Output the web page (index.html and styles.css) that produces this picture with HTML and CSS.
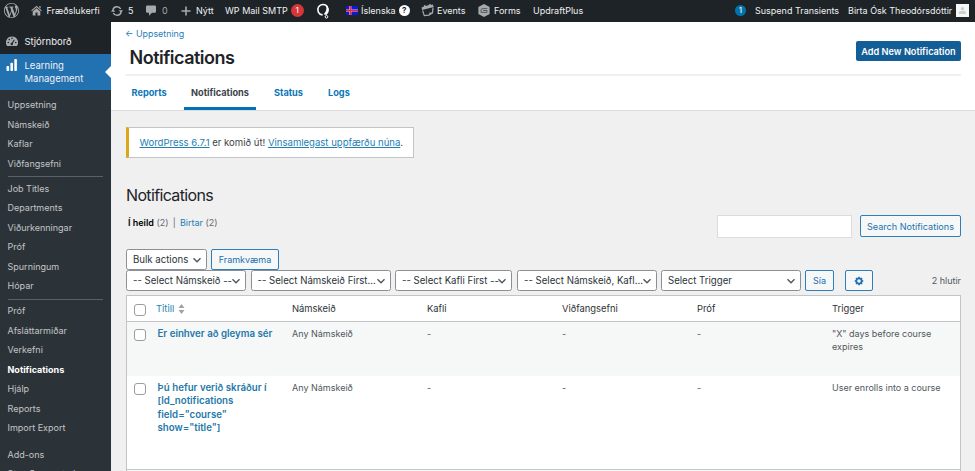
FILE: index.html
```html
<!DOCTYPE html>
<html lang="is">
<head>
<meta charset="utf-8">
<title>Notifications</title>
<link rel="stylesheet" href="styles.css">
</head>
<body>
<svg class="defs" width="0" height="0" aria-hidden="true">
  <symbol id="chev" viewBox="0 0 10 10"><path d="M1.500 3.200 5 6.700 8.500 3.200" fill="none" stroke="#50575e" stroke-width="1.400"/></symbol>
</svg>
<header class="bar">
  <span class="it wp"><svg width="15" height="15" viewBox="0 0 20 20"><path fill="#a7aaad" d="M20 10c0-5.510-4.490-10-10-10C4.480 0 0 4.490 0 10c0 5.520 4.480 10 10 10 5.510 0 10-4.480 10-10zM7.780 15.370L4.370 6.220c.55-.02 1.170-.08 1.170-.08.5-.06.44-1.130-.06-1.110 0 0-1.450.11-2.370.11-.18 0-.37 0-.58-.01C4.120 2.690 6.870 1.110 10 1.110c2.330 0 4.450.87 6.050 2.340-.68-.11-1.650.39-1.650 1.580 0 .74.45 1.360.9 2.100.35.61.55 1.360.55 2.460 0 1.490-1.400 5-1.400 5l-3.030-8.370c.54-.02.82-.17.82-.17.5-.05.44-1.250-.06-1.220 0 0-1.440.12-2.380.12-.87 0-2.330-.12-2.330-.12-.5-.03-.56 1.200-.06 1.220l.92.08 1.260 3.410zM17.410 10c.24-.64.74-1.870.43-4.250.7 1.290 1.050 2.710 1.050 4.250 0 3.290-1.730 6.240-4.400 7.780.97-2.590 1.940-5.200 2.920-7.780zM6.100 18.090C3.120 16.650 1.110 13.530 1.110 10c0-1.300.23-2.480.72-3.590C3.250 10.300 4.670 14.200 6.100 18.090zm4.030-6.630l2.580 6.980c-.86.29-1.760.45-2.710.45-.79 0-1.570-.11-2.290-.33.81-2.380 1.620-4.740 2.420-7.100z"/></svg></span>
  <span class="it home"><svg width="11" height="11" viewBox="0 0 11 11" fill="#a7aaad"><path d="M5.500.7 10.800 5.500l-.7.800L5.500 2.200.9 6.300.2 5.500zM8.300 1h1.300v2.600L8.300 2.400z"/><path d="M1.700 6.600 5.500 3.200l3.800 3.400v4H6.500V7.500h-2v3.100H1.700z"/></svg><span>Fræðslukerfi</span></span>
  <span class="it upd"><svg width="12" height="12" viewBox="0 0 12 12"><path d="M1.900 4.700A4.200 4.200 0 0 1 9.700 4M10.100 7.300A4.200 4.200 0 0 1 2.300 8" fill="none" stroke="#a7aaad" stroke-width="1.500"/><path fill="#a7aaad" d="M7.800 5.200h4.200L10 8zM0 6.800h4.200L2.100 4z"/></svg><span>5</span></span>
  <span class="it com dim"><svg width="10" height="11" viewBox="0 0 10 11"><path fill="#a7aaad" d="M1.200.500h7.600Q10 .5 10 1.700v4.800q0 1.200-1.200 1.200H6L3 10.800V7.700H1.200Q0 7.700 0 6.500V1.700Q0 .5 1.200.5z"/></svg><span>0</span></span>
  <span class="it new"><svg width="10" height="10" viewBox="0 0 10 10"><path d="M5 .500v9M.500 5h9" stroke="#a7aaad" stroke-width="1.600"/></svg><span>Nýtt</span></span>
  <span class="it smtp"><span>WP Mail SMTP</span><b class="badge red">1</b></span>
  <span class="it seo"><svg width="15" height="17" viewBox="0 0 15 17" fill="none" stroke="#fff"><path d="M6.600 12.900A5.200 5.200 0 1 1 11.500 5.200" stroke-width="1.600"/><path d="M10 3.200q3.300 1.700 2.900 5.200-.4 3.400-2.600 4.600L7.700 12.200Q11.500 9 10 3.200z" fill="#fff" stroke="none"/><circle cx="10.500" cy="14.800" r="1.300" stroke-width="1"/></svg></span>
  <span class="it lang"><svg width="12" height="9" viewBox="0 0 12 9"><path fill="#0b19d9" d="M0 0h12v9H0z"/><path d="M4.300 0v9M0 4.500h12" stroke="#ffb5b5" stroke-width="2.200"/><path d="M4.300 0v9M0 4.500h12" stroke="#f11c2c" stroke-width="1.200"/></svg><span>Íslenska</span><b class="badge help">?</b></span>
  <span class="it ev"><svg width="13" height="13" viewBox="0 0 13 13"><path fill="#a7aaad" d="M.5 3.500 3 2.600 2.800 1.300l1.300-.4.500 1.200 3.600-1.200L8 .2l1.400-.3.500 1.100 1.900-.5 1 2.500L1.100 6z"/><path d="m1.600 6.500 1.700 5.200 4.500-.6 3.700-2.300L12 3.600" fill="none" stroke="#a7aaad" stroke-width="1.200"/><path d="m8 11 .5-2.600 3.300.3z" fill="#a7aaad"/></svg><span>Events</span></span>
  <span class="it fo"><svg width="12" height="13" viewBox="0 0 12 13"><path fill="#a7aaad" d="m6 0 5.600 3v7L6 13 .4 10V3z"/><path d="M9.300 4.600H4.200Q3 4.600 3 6.500v1.900h6V6.500H5" fill="none" stroke="#4b5056" stroke-width=".9"/></svg><span>Forms</span></span>
  <span class="it up"><span>UpdraftPlus</span></span>
  <span class="it right"><b class="badge blue">1</b></span>
  <span class="it sus"><span>Suspend Transients</span></span>
  <span class="it usr"><span>Birta Ósk Theodórsdóttir</span><svg width="13" height="13" viewBox="0 0 13 13"><path fill="#f6f7f7" d="M0 0h13v13H0z"/><circle cx="6.500" cy="4.800" r="1.800" fill="#cfd1d3"/><path fill="#cfd1d3" d="M3 10V8.500q0-1.500 1.500-1.500h4Q10 7 10 8.500V10z"/></svg></span>
</header>
<div class="cols">
<aside class="side">
  <div class="top dash"><svg width="12" height="11" viewBox="0 0 12 11"><path fill="#a7aaad" d="M6 .5a6 6 0 0 0-5 9.400h10A6 6 0 0 0 6 .5z"/><g fill="#1d2327"><circle cx="2.300" cy="6.500" r=".8"/><circle cx="3.300" cy="3.600" r=".8"/><circle cx="6" cy="2.300" r=".8"/><circle cx="9.700" cy="6.500" r=".8"/></g><path d="m5.700 8 2.600-4.300" stroke="#1d2327" stroke-width="1.100"/><circle cx="5.800" cy="8" r="1.200" fill="#1d2327"/></svg><span>Stjórnborð</span></div>
  <div class="top cur"><svg width="12" height="12" viewBox="0 0 12 12" fill="#fff"><rect x="0.500" y="7" width="2.600" height="5" rx=".8"/><rect x="4.400" y="3.700" width="2.600" height="8.300" rx=".8"/><rect x="8.300" y="0" width="2.600" height="12" rx=".8"/></svg><span>Learning<br>Management</span></div>
  <nav class="sub">
    <a>Uppsetning</a><a>Námskeið</a><a>Kaflar</a><a>Viðfangsefni</a><hr>
    <a>Job Titles</a><a>Departments</a><a>Viðurkenningar</a><a>Próf</a><a>Spurningum</a><a>Hópar</a><hr>
    <a>Próf</a><a>Afsláttarmiðar</a><a>Verkefni</a><a class="on">Notifications</a><a>Hjálp</a><a>Reports</a><a>Import Export</a>
    <a class="gap">Add-ons</a><a>Stay Connected</a>
  </nav>
</aside>
<main class="main">
  <section class="head">
    <a class="back">← Uppsetning</a>
    <div class="title"><h1>Notifications</h1><button class="add">Add New Notification</button></div>
    <nav class="tabs"><a class="t1">Reports</a><a class="t2">Notifications</a><a class="t3">Status</a><a class="t4">Logs</a></nav>
  </section>
  <section class="body">
    <div class="notice"><p><a>WordPress 6.7.1</a> er komið út! <a>Vinsamlegast uppfærðu núna</a>.</p></div>
    <h2>Notifications</h2>
    <div class="views"><p><b>Í heild</b> (2) <i>|</i> <a>Birtar</a> (2)</p><div class="search"></div><button class="btn sbtn">Search Notifications</button></div>
    <div class="row bulk"><div class="sel s0"><span>Bulk actions</span><svg><use href="#chev"/></svg></div><button class="btn fr">Framkvæma</button></div>
    <div class="row filt">
      <div class="sel s1"><span>-- Select Námskeið --</span><svg><use href="#chev"/></svg></div>
      <div class="sel s2"><span>-- Select Námskeið First...</span><svg><use href="#chev"/></svg></div>
      <div class="sel s3"><span>-- Select Kafli First --</span><svg><use href="#chev"/></svg></div>
      <div class="sel s4"><span>-- Select Námskeið, Kafl...</span><svg><use href="#chev"/></svg></div>
      <div class="sel s5"><span>Select Trigger</span><svg><use href="#chev"/></svg></div>
      <button class="btn sia">Sía</button>
      <button class="btn gear"><svg width="10" height="10" viewBox="0 0 10 10"><circle cx="5" cy="5" r="2.700" fill="none" stroke="#2271b1" stroke-width="1.800"/><path d="M5 .700v1.500M5 7.800v1.500M.700 5h1.500M7.800 5h1.500M2 2l1 1M7 7l1 1M8 2 7 3M3 7 2 8" stroke="#2271b1" stroke-width="1.600"/></svg></button>
      <span class="count">2 hlutir</span>
    </div>
    <div class="table">
      <div class="tr th"><i class="cb"></i><div class="link">Titill<svg width="7" height="10" viewBox="0 0 7 10"><path fill="#a0a3a6" d="M.5 4 3.500 0l3 4zM.5 6l3 4 3-4z"/></svg></div><div>Námskeið</div><div>Kafli</div><div>Viðfangsefni</div><div>Próf</div><div>Trigger</div></div>
      <div class="tr alt"><i class="cb"></i><b>Er einhver að gleyma sér</b><div>Any Námskeið</div><div>-</div><div>-</div><div>-</div><div>"X" days before course expires</div></div>
      <div class="tr r2"><i class="cb"></i><b>Þú hefur verið skráður í [ld_notifications field="course" show="title"]</b><div>Any Námskeið</div><div>-</div><div>-</div><div>-</div><div>User enrolls into a course</div></div>
      <div class="rest"></div>
    </div>
  </section>
</main>
</div>
</body>
</html>
```
FILE: styles.css
```css
* { box-sizing: border-box; }
html, body { margin: 0; height: 471px; overflow: hidden; }
body { font-family: Inter, "Liberation Sans", sans-serif; font-size: 9px; line-height: 13.4px; color: #3c434a; background: #f0f0f1; }
h1, h2, p { margin: 0; }
svg { flex: none; display: block; }
.defs { position: absolute; }
button { font-family: inherit; margin: 0; padding: 0; white-space: nowrap; }

.bar { display: flex; height: 22px; background: #1d2327; color: #f0f0f1; white-space: nowrap; }
.it { display: flex; align-items: center; flex: none; height: 21px; }
.wp { width: 31px; padding-left: 4px; }
.home { width: 80px; gap: 4.5px; }
.upd { width: 35px; gap: 5px; }
.com { width: 35px; gap: 6px; }
.dim { color: #a7aaad; }
.new { width: 44px; gap: 5px; }
.smtp { width: 91px; gap: 3px; }
.seo { width: 30px; }
.lang { width: 75px; gap: 3px; }
.ev { width: 57px; gap: 3px; }
.fo { width: 55px; gap: 4px; }
.right { margin-left: auto; width: 20px; }
.sus { width: 93px; }
.usr { width: 127px; gap: 4px; }
.badge { display: flex; align-items: center; justify-content: center; border-radius: 50%; width: 12px; height: 12px; font-size: 8px; font-weight: 500; }
.red { background: #d63638; width: 13px; height: 13px; }
.help { background: #fff; color: #1d2327; font-weight: 700; width: 11px; height: 11px; }
.blue { background: #0073aa; width: 11px; height: 11px; }

.cols { display: flex; height: 449px; }
.side { width: 111px; flex: none; background: #1d2327; color: #f0f0f1; overflow: hidden; }
.top { display: flex; gap: 6.500px; padding-left: 6px; font-size: 9.5px; }
.dash { height: 32px; padding-top: 7px; align-items: center; }
.cur { position: relative; height: 36px; background: #2271b1; padding-top: 5px; line-height: 12.8px; }
.cur span { margin-top: 1px; }
.cur::after { content: ""; position: absolute; right: 0; top: 12px; border: 6px solid transparent; border-left: 0; border-right-color: #fff; }
.sub { background: #2c3338; height: 381px; padding-top: 5px; color: #c3c4c7; }
.sub a { display: block; height: 19.5px; line-height: 19.5px; padding-left: 7.5px; }
.sub hr { border: 0; height: 1px; background: #5b6066; margin: 3px 8px 1.600px; }
.sub .on { color: #fff; font-weight: 700; }
.sub .gap { margin-top: 7px; }

.main { flex: 1; min-width: 0; display: flex; flex-direction: column; }
.head { flex: none; height: 89px; background: #fff; border-bottom: 1px solid #dcdcde; padding: 5px 14px 0 14px; }
.back { display: block; color: #2980b3; height: 13px; font-size: 8.900px; }
.title { display: flex; justify-content: space-between; height: 36px; border-bottom: 2px solid #f0f0f1; padding-left: 4.5px; }
h1 { font-size: 18px; letter-spacing: -.5px; line-height: 36px; font-weight: 600; color: #1d2327; }
.add { width: 105px; height: 20px; margin-top: 1px; background: #135e96; border: 0; border-radius: 2px; color: #fff; font-weight: 600; font-size: 9.2px; }
.tabs { display: flex; height: 34px; line-height: 33px; padding-left: 6.5px; font-weight: 700; font-size: 9.200px; color: #0b76b7; }
.t1 { width: 52.5px; }
.t2 { width: 72px; text-align: center; color: #3c434a; border-bottom: 3px solid #0073b7; }
.t3 { width: 72px; padding-left: 18px; }
.t4 { width: 54px; }

.body { flex: 1; min-height: 0; display: flex; flex-direction: column; padding: 16px 14px 0 15px; }
.body > * { flex: none; }
.notice { width: 288px; height: 31px; background: #fff; border: 1px solid #c3c4c7; border-left: 3px solid #dba617; padding: 8px 10.500px; white-space: nowrap; }
.notice p { font-size: 9.560px; }
.notice a { text-decoration: underline; color: #2280b0; }
h2 { margin-top: 26px; font-size: 16px; letter-spacing: -.65px; line-height: 22px; font-weight: 400; color: #1d2327; }
.views { display: flex; height: 43px; padding: 9px 0 0; }
.views p { flex: 1; padding: 1px 2px 0; color: #646970; }
.views b { color: #000; font-weight: 600; }
.views i { font-style: normal; margin: 0 1.700px; }
.views a, .link { color: #2280b0; }
.search { width: 135px; height: 23px; background: #fff; border: 1px solid #dcdcde; margin-right: 8px; }
.btn { height: 22px; border: 1px solid #2f7dbb; border-radius: 2px; background: #f6f7f7; color: #2271b1; font-size: 9px; display: flex; align-items: center; justify-content: center; flex: none; }
.sbtn { width: 101px; font-size: 9.100px; }
.row { display: flex; height: 21px; }
.row .btn { height: 21px; }
.sel { display: flex; align-items: center; height: 21px; border: 1px solid #8c8f94; border-radius: 2.500px; background: #fff; color: #2c3338; font-size: 9.650px; white-space: nowrap; padding: 0 4px 0 6px; flex: none; }
.sel span { flex: 1; min-width: 0; }
.sel svg { width: 10px; height: 10px; }
.s0 { width: 81px; margin-right: 4px; }
.fr { width: 68px; }
.s1 { width: 120px; margin-right: 4.5px; }
.s2 { width: 140px; margin-right: 4.5px; }
.s3 { width: 117px; margin-right: 5px; }
.s4 { width: 140px; margin-right: 4px; }
.s5 { width: 140px; margin-right: 4px; }
.sia { width: 29px; margin-right: 11px; }
.gear { width: 28px; }
.count { margin-left: auto; line-height: 21px; color: #50575e; }

.body > .table { flex: 1; min-height: 0; overflow: hidden; margin-top: 4px; border: 1px solid #c3c4c7; border-bottom: 0; background: #fff; }
.tr { display: grid; grid-template-columns: 30px 135px 135px 135px 135px 135px 1fr; height: 54px; padding-top: 5px; color: #50575e; }
.tr > b { color: #1f78aa; font-weight: 600; font-size: 9.700px; padding: 0 16px 0 .5px; }
.tr > div:last-child { padding-right: 16px; }
.r2 > div:last-child { white-space: nowrap; }
.th { height: 26px; padding-top: 6px; border-bottom: 1px solid #c3c4c7; color: #2c3338; font-size: 9.400px; }
.alt { background: #f6f7f7; }
.r2 { height: 94px; border-bottom: 1px solid #c3c4c7; }
.rest { height: 20px; background: #f6f7f7; }
.link { display: flex; gap: 4px; align-items: center; height: 13px; margin-left: -1px; }
.cb { width: 12px; height: 12px; border: 1px solid #9a9da1; border-radius: 3px; margin: 2px 0 0 7px; background: #fff; }
```
